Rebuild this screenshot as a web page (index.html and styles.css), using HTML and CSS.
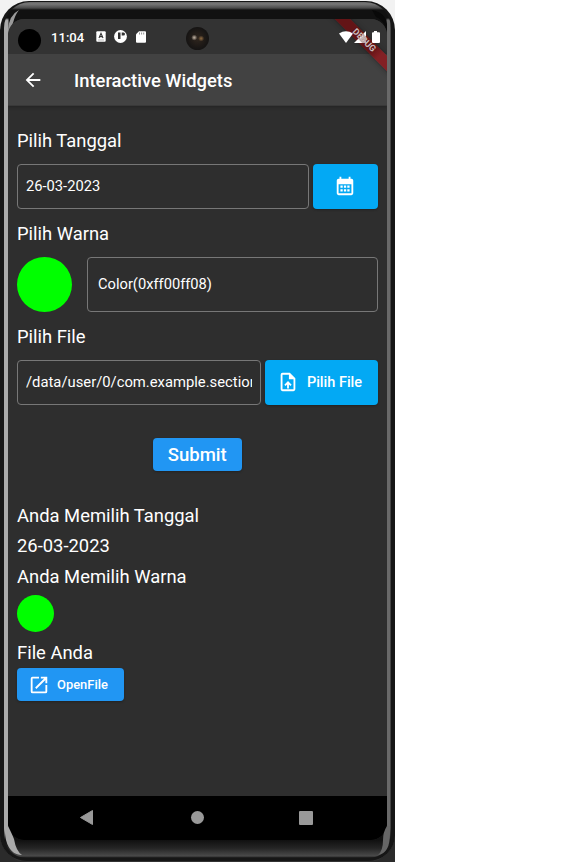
FILE: index.html
```html
<!DOCTYPE html>
<html lang="id">
<head>
<meta charset="utf-8">
<title>Interactive Widgets</title>
<link rel="stylesheet" href="styles.css">
</head>
<body>
<div class="stage">
<div class="phone">
<svg class="glare" width="395" height="861" viewBox="0 1 395 861">
  <path d="M8 30Q9 15 19 10Q15 15 13 23L8 34z" fill="#999"/>
  <path d="M372 10Q385 12 387 24V34Q385 20 376 17z" fill="#090909"/>
  <path d="M8 826Q12 834 14 839Q16 851 22 855Q10 855 6 840L4 826z" fill="#aaa"/>
  <path d="M387 826Q383 832 383 840Q383 851 378 855Q390 853 390 834V826z" fill="#666"/>
</svg>
<div class="bezel">
<div class="screen">
  <header class="status">
    <span class="cutout"></span>
    <span class="time">11:04</span>
    <svg class="s-key" width="10" height="11" viewBox="0 0 10 11"><rect x=".3" y=".3" width="9.4" height="10.4" rx="1" fill="#fff"/><path d="M3 7 5 2.300 7 7M3.700 5.600h2.600" fill="none" stroke="#333" stroke-width="1.100"/><path d="M2 9h6" stroke="#aaa" stroke-width=".8"/></svg>
    <svg class="s-circle" width="13" height="13" viewBox="0 0 13 13"><circle cx="6.500" cy="6.500" r="6.400" fill="#fff"/><path d="M4 2.500h2.500V9H4zM7.700 2.500h1.800a1.500 1.500 0 0 1 0 3H7.700z" fill="#333"/></svg>
    <svg class="s-sd" width="10" height="12" viewBox="0 0 10 12"><path d="M3 .2h6a1 1 0 0 1 1 1v9.600a1 1 0 0 1-1 1H1a1 1 0 0 1-1-1V3.200z" fill="#fff"/><path d="M3.500 1.500v2M5.600 1.500v2M7.700 1.500v2" stroke="#777" stroke-width=".8"/></svg>
    <span class="lens"></span>
    <span class="ribbon band"></span>
    <svg class="signals" width="42" height="13" viewBox="0 0 42 13" fill="#fff"><path d="M0 2.500Q7-2 14 2.500L7 12z"/><path d="M15 12 27 0v12z"/><path d="M35 1.200V.1h3v1.100h2a1 1 0 0 1 1 1V11a1 1 0 0 1-1 1h-6a1 1 0 0 1-1-1V2.200a1 1 0 0 1 1-1z"/></svg>
    <span class="ribbon caption">DEBUG</span>
  </header>
  <div class="appbar">
    <svg width="22" height="22" viewBox="0 0 24 24" fill="#fff"><path d="M20 11H7.830l5.590-5.590L12 4l-8 8 8 8 1.410-1.410L7.830 13H20z"/></svg>
    <h1>Interactive Widgets</h1>
  </div>
  <main>
    <p class="label">Pilih Tanggal</p>
    <div class="row">
      <div class="field">26-03-2023</div>
      <div class="button date"><svg width="22" height="22" viewBox="0 0 24 24" fill="#fff"><path d="M19 4h-1V2h-2v2H8V2H6v2H5a2 2 0 0 0-2 2v14a2 2 0 0 0 2 2h14a2 2 0 0 0 2-2V6a2 2 0 0 0-2-2zm0 16H5V10h14zM7 11.500h2.500V14H7zm3.800 0h2.500V14h-2.500zm3.700 0H17V14h-2.500zM7 15.500h2.500V18H7zm3.800 0h2.500V18h-2.500zm3.700 0H17V18h-2.500z"/></svg></div>
    </div>
    <p class="label">Pilih Warna</p>
    <div class="row color-row">
      <span class="dot"></span>
      <div class="field tall">Color(0xff00ff08)</div>
    </div>
    <p class="label">Pilih File</p>
    <div class="row">
      <div class="field path"><span class="clip">/data/user/0/com.example.section</span></div>
      <div class="button pick"><svg width="22" height="22" viewBox="0 0 24 24" fill="#fff"><path d="M14 2H6a2 2 0 0 0-2 2v16a2 2 0 0 0 2 2h12a2 2 0 0 0 2-2V8zm4 18H6V4h7v5h5zM8 15l1.410 1.410L11 14.840V19h2v-4.160l1.590 1.590L16 15.010 12.010 11z"/></svg><span>Pilih File</span></div>
    </div>
    <div class="button submit">Submit</div>
    <p class="result">Anda Memilih Tanggal</p>
    <p class="result">26-03-2023</p>
    <p class="result">Anda Memilih Warna</p>
    <span class="dot small"></span>
    <p class="result file">File Anda</p>
    <div class="button open"><svg width="22" height="22" viewBox="0 0 24 24" fill="#fff"><path d="M19 19H5V5h7V3H5a2 2 0 0 0-2 2v14a2 2 0 0 0 2 2h14a2 2 0 0 0 2-2v-7h-2zM14 3v2h3.590l-9.830 9.830 1.410 1.410L19 6.410V10h2V3z"/></svg><span>OpenFile</span></div>
  </main>
  <nav>
    <svg width="13" height="15" viewBox="0 0 13 15"><path d="M.5 7.500 12.500.5v14z" fill="#999" stroke="#999" stroke-linejoin="round"/></svg>
    <span class="home"></span>
    <span class="recent"></span>
  </nav>
</div>
</div>
</div>
</div>
</body>
</html>
```
FILE: styles.css
```css
* { box-sizing: border-box; }
body { margin: 0; background: #fff; font-family: Roboto, sans-serif; color: #fff; }
h1, p { margin: 0; font-weight: 400; }
svg { display: block; flex: none; }
.stage { width: 395px; height: 862px; padding-top: 1px; background: linear-gradient(#f2f2f2 0 50%, #2b2b2b 50%); overflow: hidden; }
.phone { position: relative; height: 861px; padding: 1px 4px 2px; border-radius: 29px 29px 27px 27px; background: #161616; border-bottom: 1px solid #333; }
.glare { position: absolute; left: 0; top: 0; z-index: 1; pointer-events: none; }
.bezel { height: 856px; padding: 17px 4px 0; border-radius: 26px 26px 22px 22px; overflow: hidden;
  background: linear-gradient(#666 0, #777 2px, #4b4b4b 6px, #111 8px, #111 16px, transparent 18px, transparent 826px, #101010 838px, #242424 846px, #4a4a4a 854px, #111 856px), linear-gradient(90deg, #aaa 0 4px, #111 5px 382px, #696969 383px 386px, #222 387px); }
.screen { width: 379px; height: 821px; border-radius: 16px; overflow: hidden; background: #2e2e2e; display: flex; flex-direction: column; }
.status { position: relative; z-index: 1; height: 35px; flex: none; display: flex; align-items: center; background: #333; }
.cutout { width: 23px; height: 23px; border-radius: 50%; background: #000; margin: 7px 0 0 10px; }
.time { width: 34px; margin: 1px 0 0 10px; font-size: 13.100px; font-weight: 500; white-space: nowrap; }
.s-key { margin-left: 11px; }
.s-circle { margin-left: 8px; }
.s-sd { margin-left: 9px; }
.lens { width: 23px; height: 23px; margin: 3px 0 0 40px; border-radius: 50%; background: radial-gradient(circle at 36% 46%, #b0a394 0 .5px, transparent 3px), radial-gradient(circle at 66% 50%, #80603c 0 .5px, transparent 3px), radial-gradient(#30261e, #171514 65%, #101010); }
.ribbon { position: absolute; z-index: 3; right: -27px; top: 16px; width: 100px; height: 11px; transform: rotate(45deg); color: #c9bcbd; font-size: 9px; line-height: 11px; font-weight: 700; text-align: center; }
.band { z-index: 1; background: linear-gradient(90deg, #631416 0 62%, #832024 72%); box-shadow: 0 0 5px #1118; }
.caption { text-shadow: 0 0 1px #631416; }
.signals { position: absolute; z-index: 2; right: 6px; top: 12px; }
.appbar { height: 52px; flex: none; display: flex; align-items: center; gap: 30px; padding: 1px 0 0 14px; background: #424242; border-bottom: 1px solid #393939; box-shadow: 0 1px 3px #222; }
.appbar h1 { font-size: 18.400px; line-height: 22px; padding-top: 2px; font-weight: 500; }
main { flex: 1; padding: 22px 9.500px 0 9px; display: flex; flex-direction: column; }
.label { height: 25px; line-height: 25px; font-size: 18.400px; }
.row { height: 44.500px; flex: none; margin: 11px 0 12.500px; display: flex; gap: 4px; }
.field { flex: 1; min-width: 0; border: 1px solid #777; border-radius: 4px; padding: 0 8px 1px; display: flex; align-items: center; font-size: 14.700px; }
.tall { padding: 0 8px 2px 10px; }
.path { font-size: 14.800px; }
.clip { overflow: hidden; white-space: nowrap; }
.button { display: flex; align-items: center; justify-content: center; border-radius: 4px; background: #03a9f4; font-weight: 500; box-shadow: 0 1px 2px #222; }
.date { width: 65px; }
.pick { width: 113px; gap: 8px; padding-right: 3px; font-size: 14.500px; }
.color-row { height: 55px; gap: 15px; margin-bottom: 12px; }
.dot { width: 55px; height: 55px; flex: none; border-radius: 50%; background: #0f0; }
.submit { width: 89px; height: 33px; margin: 21px auto 29px; background: #2196f3; font-size: 18.500px; padding-top: 1px; }
.result { height: 30.300px; line-height: 32px; font-size: 18.400px; }
.small { width: 37px; height: 37px; margin-top: 4px; }
.file { margin-top: 5.500px; }
.open { width: 107px; height: 33px; background: #2196f3; gap: 7px; padding: 1px 5px 0 0; font-size: 12.900px; }
nav { height: 44px; flex: none; background: #000; display: flex; align-items: center; padding: 0 0 1px 72px; }
.home { width: 13px; height: 13px; border-radius: 50%; background: #999; margin-left: 98px; }
.recent { width: 14px; height: 14px; border-radius: 1px; background: #999; margin-left: 95px; }
```
